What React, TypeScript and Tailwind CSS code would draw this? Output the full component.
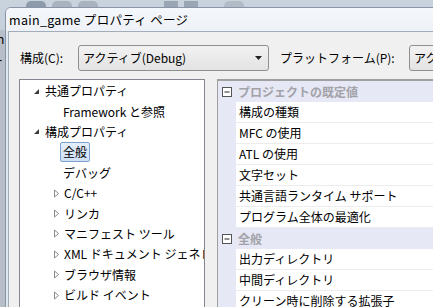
import React from 'react';

const font = { fontFamily: '"Noto Sans CJK JP", "Noto Sans", sans-serif' };

function Expanded() {
    return (
        <svg width="7" height="7" viewBox="0 0 7 7" className="shrink-0">
            <path d="M6 1 L6 6 L1 6 Z" fill="#3c3c3c" />
        </svg>
    );
}

function Collapsed() {
    return (
        <svg width="7" height="9" viewBox="0 0 7 9" className="shrink-0">
            <path d="M1.5 1 L5.5 4.5 L1.5 8 Z" fill="none" stroke="#8a8a8a" strokeWidth="1" />
        </svg>
    );
}

function Minus() {
    return (
        <svg width="10" height="10" viewBox="0 0 10 10" className="shrink-0">
            <rect x="0.5" y="0.5" width="9" height="9" fill="#fff" stroke="#555" />
            <path d="M2.5 5 H7.5" stroke="#222" />
        </svg>
    );
}

function Arrow() {
    return (
        <svg width="7" height="4" viewBox="0 0 7 4">
            <path d="M0 0 H7 L3.5 4 Z" fill="#222" />
        </svg>
    );
}

const tree = [
    { label: '共通プロパティ', kind: 'open', level: 0 },
    { label: 'Framework と参照', kind: 'leaf', level: 1 },
    { label: '構成プロパティ', kind: 'open', level: 0 },
    { label: '全般', kind: 'selected', level: 1 },
    { label: 'デバッグ', kind: 'leaf', level: 1 },
    { label: 'C/C++', kind: 'closed', level: 1 },
    { label: 'リンカ', kind: 'closed', level: 1 },
    { label: 'マニフェスト ツール', kind: 'closed', level: 1 },
    { label: 'XML ドキュメント ジェネレーター', kind: 'closed', level: 1 },
    { label: 'ブラウザ情報', kind: 'closed', level: 1 },
    { label: 'ビルド イベント', kind: 'closed', level: 1 },
    { label: 'カスタム ビルド ステップ', kind: 'closed', level: 1 },
];

const grid = [
    { head: 'プロジェクトの既定値', rows: ['構成の種類', 'MFC の使用', 'ATL の使用', '文字セット', '共通言語ランタイム サポート', 'プログラム全体の最適化'] },
    { head: '全般', rows: ['出力ディレクトリ', '中間ディレクトリ', 'クリーン時に削除する拡張子', 'ビルド ログ ファイル'] },
];

export default function App() {
    return (
        <div className="relative w-[433px] h-[307px] overflow-hidden bg-gradient-to-b from-[#c9d3de] to-[#aab3bd] text-[12px] text-black" style={font}>
            {/* desktop behind */}
            <div className="flex gap-[6px] pl-[26px] pt-[1px]">
                <div className="w-[20px] h-[6px] rounded-t-[5px] bg-[#8d9bab]" />
                <div className="w-[20px] h-[6px] rounded-t-[5px] bg-[#a9b3be]" />
                <div className="w-[20px] h-[6px] rounded-t-[5px] bg-[#a9b3be]" />
                <div className="ml-[60px] w-[14px] h-[6px] bg-[#9aa6b3]" />
                <div className="w-[14px] h-[6px] bg-[#9aa6b3]" />
                <div className="ml-[20px] w-[20px] h-[6px] rounded-t-[5px] bg-[#b3bcc6]" />
            </div>
            <div className="absolute left-0 top-[30px] w-[6px] h-[277px] bg-[#b7bec7] text-[12px] leading-none overflow-hidden">
                <div className="mt-[3px] -ml-[3px]">n</div>
                <div className="mt-[11px] -ml-[3px]">r</div>
            </div>

            {/* dialog window */}
            <div className="absolute left-[5px] top-[7px] w-[440px] h-[320px] border border-[#8895a6] rounded-tl-[6px] bg-[#dfe7f0] flex flex-col">
                <div className="h-[23px] flex items-center pl-[3px] pt-[1px] bg-gradient-to-b from-[#f4f7fb] to-[#eef2f7] rounded-tl-[5px] text-[12.5px] tracking-[0.3px]">
                    main_game プロパティ ページ
                </div>
                <div className="flex-1 ml-[2px] border-l border-t border-[#a3adb9] bg-[#f0f0f0] pl-[10px] pt-[13px]">
                    <div className="flex items-center h-[26px]">
                        <div className="w-[59px] shrink-0 pl-[1px]">構成(C):</div>
                        <div className="w-[191px] shrink-0 h-[26px] rounded-[3px] border border-[#8e8f8f] bg-gradient-to-b from-[#f2f2f2] to-[#e3e3e3] flex items-center pl-[4px] pr-[6px] justify-between">
                            <span>アクティブ(Debug)</span>
                            <Arrow />
                        </div>
                        <div className="w-[140px] shrink-0 pl-[11px] whitespace-nowrap">プラットフォーム(P):</div>
                        <div className="w-[80px] shrink-0 h-[26px] rounded-[3px] border border-[#8e8f8f] bg-gradient-to-b from-[#f2f2f2] to-[#e3e3e3] flex items-center pl-[4px] whitespace-nowrap">
                            アクティブ
                        </div>
                    </div>

                    <div className="flex mt-[8px] gap-[12px]">
                        {/* tree */}
                        <div className="w-[186px] shrink-0 h-[240px] border border-[#828790] bg-white pt-[1px] overflow-hidden">
                            {tree.map((t, i) => (
                                <div key={i} className="h-[20.4px] flex items-center whitespace-nowrap">
                                    {t.level === 0 ? (
                                        <div className="flex items-center pl-[13px] gap-[5px]">
                                            <Expanded />
                                            <span>{t.label}</span>
                                        </div>
                                    ) : t.kind === 'closed' ? (
                                        <div className="flex items-center pl-[33px] gap-[4px]">
                                            <Collapsed />
                                            <span>{t.label}</span>
                                        </div>
                                    ) : t.kind === 'selected' ? (
                                        <div className="ml-[40px] px-[2px] h-[20px] flex items-center rounded-[2px] border border-[#7da2ce] bg-gradient-to-b from-[#e4eefb] to-[#cfe0f6]">
                                            {t.label}
                                        </div>
                                    ) : (
                                        <div className="pl-[43px]">{t.label}</div>
                                    )}
                                </div>
                            ))}
                        </div>

                        {/* property grid */}
                        <div className="w-[230px] shrink-0 h-[240px] border-t-2 border-l border-[#a0a0a0] bg-[#e7e8f5] overflow-hidden">
                            {grid.map((g, gi) => (
                                <div key={gi}>
                                    <div className="h-[21px] flex items-center pl-[4px] gap-[6px] text-[#a2a2a8] font-bold">
                                        <Minus />
                                        <span>{g.head}</span>
                                    </div>
                                    {g.rows.map((r, ri) => (
                                        <div key={ri} className="ml-[18px] h-[21px] bg-white border-b border-[#ececec] flex items-center pl-[3px] whitespace-nowrap">
                                            {r}
                                        </div>
                                    ))}
                                </div>
                            ))}
                        </div>
                    </div>
                </div>
            </div>
        </div>
    );
}
